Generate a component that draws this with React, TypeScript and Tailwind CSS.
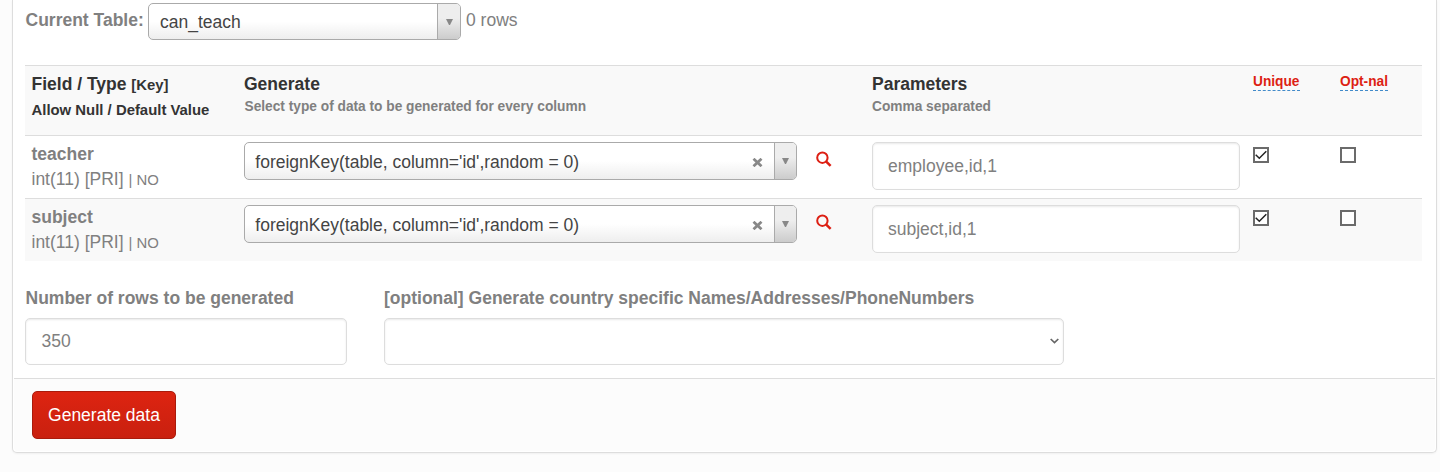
import React from 'react';

type Column = { name: string; params: string };

const columns: Column[] = [
  { name: 'teacher', params: 'employee,id,1' },
  { name: 'subject', params: 'subject,id,1' },
];

function Combo({ label, clearable, className }: { label: string; clearable?: boolean; className: string }) {
  return (
    <div
      className={`flex overflow-hidden rounded-[5px] border border-[#aaa] bg-linear-to-b from-white from-50% to-[#eee] text-[#444] ${className}`}
    >
      <span className={clearable ? 'flex-1 pl-[10.3px] leading-[38px]' : 'flex-1 pl-[11px] leading-[36px]'}>{label}</span>
      {clearable && (
        <svg className="mt-[15px] mr-[11px] h-[9px] w-[11px]" viewBox="0 0 11 9" fill="none" stroke="#888" strokeWidth="2.8">
          <path d="M1.5 .8 9.5 8.2M9.5 .8 1.5 8.2" />
        </svg>
      )}
      <span
        className={`flex justify-center border-l border-[#aaa] bg-linear-to-b from-[#eee] from-40% to-[#ccc] ${clearable ? 'w-[22px]' : 'w-[23px]'}`}
      >
        <svg className="mt-[15px] h-[6px] w-[7px]" viewBox="0 0 7 6">
          <path d="M0 0h7L4 6H3Z" fill="#888" />
        </svg>
      </span>
    </div>
  );
}

function Check({ checked }: { checked?: boolean }) {
  return (
    <span className="block h-4 w-4 border-2 border-[#6b6b6b] bg-white">
      {checked && (
        <svg className="h-3 w-3" viewBox="0 0 12 12" fill="none" stroke="#222" strokeWidth="1.5">
          <path d="M.7 5.7 4.3 9.2 11.3 2.2" />
        </svg>
      )}
    </span>
  );
}

function SearchIcon() {
  return (
    <svg className="mt-[9px] h-4 w-4" viewBox="0 0 16 16" fill="none" stroke="#dd1f13">
      <circle cx="6.4" cy="6.7" r="5.2" strokeWidth="2" />
      <path d="m10 10.3 4.6 4.6" strokeWidth="2.5" />
    </svg>
  );
}

const grid = 'grid grid-cols-[212.5px_572px_56px_381px_87px_88px] border-t border-[#ddd] pl-[6.5px]';
const field = 'rounded-[5px] border border-[#ddd] bg-white shadow-[inset_0_1px_2px_rgba(0,0,0,0.09)]';

export default function App() {
  return (
    <div className="h-[472px] overflow-hidden bg-[#fcfcfc] pr-[3px] pl-3 font-['Liberation_Sans',Arial,sans-serif] text-[17.5px] leading-[25px] whitespace-nowrap text-[#808080]">
      <div className="flex h-[453px] flex-col rounded-b-[5px] border border-t-0 border-[#ddd] bg-white p-px pt-0 shadow-[0_1px_2px_rgba(0,0,0,0.05)]">
        <div className="h-[378px] px-[11px] pt-[3px]">
          <div className="flex h-[62px]">
            <b className="mt-[5px] w-[123px] pl-[0.5px]">Current Table:</b>
            <Combo label="can_teach" className="h-[37px] w-[313px]" />
            <span className="mt-[5px] ml-[5px]">0 rows</span>
          </div>

          <div className="w-[1397px]">
            <div className={`${grid} h-[70px] bg-[#f9f9f9] font-bold`}>
              <div className="pt-[6px] text-[#333]">
                <div>
                  Field / Type <span className="text-[14.9px]">[Key]</span>
                </div>
                <div className="text-[14.9px]">Allow Null / Default Value</div>
              </div>
              <div className="pt-[6px]">
                <div className="text-[#333]">Generate</div>
                <div className="pl-[0.5px] text-[13.72px] leading-[19px]">Select type of data to be generated for every column</div>
              </div>
              <div />
              <div className="pt-[6px]">
                <div className="text-[#333]">Parameters</div>
                <div className="text-[13.72px] leading-[19px]">Comma separated</div>
              </div>
              {['Unique', 'Opt-nal'].map((t) => (
                <div key={t} className="flex items-start pt-[6px]">
                  <span className="h-[19px] border-b border-dashed border-[#428bca] text-[13.72px] leading-[19px] text-[#dd1f13]">
                    {t}
                  </span>
                </div>
              ))}
            </div>
            {columns.map((c) => (
              <div key={c.name} className={`${grid} h-[63px] pt-[6px] even:bg-white odd:bg-[#f9f9f9]`}>
                <div>
                  <div className="font-bold">{c.name}</div>
                  <div>
                    int(11) [PRI] <span className="text-[14.9px]">| NO</span>
                  </div>
                </div>
                <Combo label="foreignKey(table, column='id',random = 0)" clearable className="h-[38px] w-[553px]" />
                <SearchIcon />
                <div className={`${field} h-12 w-[368px] pl-[15px] leading-[46px]`}>{c.params}</div>
                <div className="pt-[5px]">
                  <Check checked />
                </div>
                <div className="pt-[5px]">
                  <Check />
                </div>
              </div>
            ))}
          </div>

          <div className="mt-[25px] flex gap-[37px]">
            <div>
              <b className="block pl-[0.5px]">Number of rows to be generated</b>
              <div className={`${field} mt-[7px] h-[47px] w-[322px] pl-[15.6px] leading-[45px]`}>350</div>
            </div>
            <div>
              <b className="block">[optional] Generate country specific Names/Addresses/PhoneNumbers</b>
              <div className={`${field} mt-[7px] flex h-[47px] w-[680px] items-center justify-end pr-[4px]`}>
                <svg className="mb-[2px] h-[6px] w-[9px]" viewBox="0 0 9 6" fill="none" stroke="#666" strokeWidth="1.7">
                  <path d="M.7 1 4.5 4.6 8.3 1" />
                </svg>
              </div>
            </div>
          </div>
        </div>

        <div className="flex-1 rounded-b-[4px] border-t border-[#ddd] bg-[#fcfcfc] pt-[12px] pl-[18px]">
          <button className="h-12 w-[144px] rounded-[5px] border border-[#a91b0c] bg-linear-to-b from-[#dd2411] to-[#c9200f] text-white">
            Generate data
          </button>
        </div>
      </div>
    </div>
  );
}
